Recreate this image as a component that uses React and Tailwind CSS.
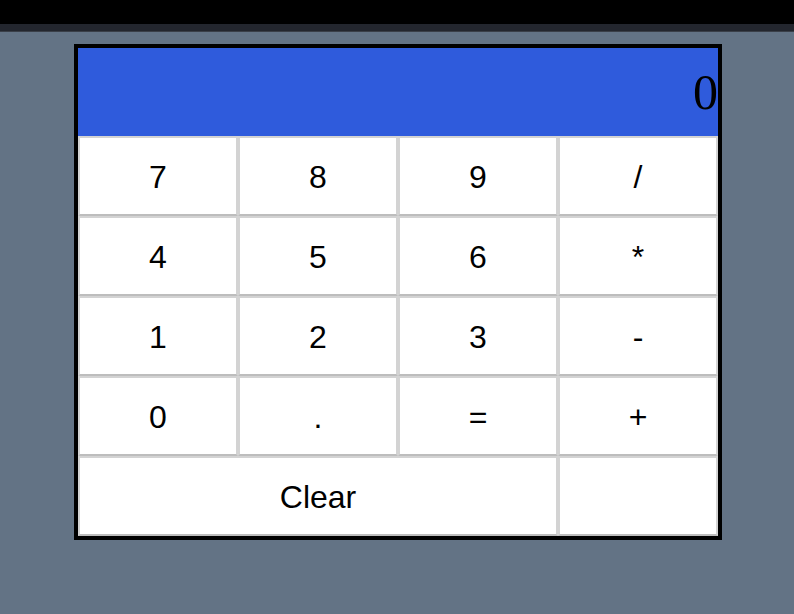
import React, { useState } from 'react';

const teclas = [
  ['7', '8', '9', '/'],
  ['4', '5', '6', '*'],
  ['1', '2', '3', '-'],
  ['0', '.', '=', '+'],
];

const Tecla = ({ texto, onClick, ancho = 'w-[160px]' }) => (
  <button
    onClick={onClick}
    className={`${ancho} h-[80px] bg-white border-2 border-[#d3d3d3] border-b-[#bdbdbd] text-black text-[32px] font-['Liberation_Sans',Arial,sans-serif] flex items-center justify-center pt-[1px]`}
  >
    {texto}
  </button>
);

const App = () => {
  const [pantalla, setPantalla] = useState('0');

  const handleTecla = (t) => {
    if (t === '=') {
      try {
        // eslint-disable-next-line no-eval
        setPantalla(String(eval(pantalla)));
      } catch (e) {
        setPantalla('Error');
      }
      return;
    }
    setPantalla(pantalla === '0' ? t : pantalla + t);
  };

  return (
    <div className="min-h-[614px] bg-[#637385]">
      <div className="h-[24px] bg-black" />
      <div className="h-[8px] bg-[#23262e] border-b border-[#3a3f48]" />
      <div className="pt-[12px]">
        <div className="w-[648px] ml-[74px] border-4 border-black">
          <div className="h-[88px] bg-[#2f5bdc] flex items-center justify-end">
            <span className="text-[50px] leading-none text-black font-['Liberation_Serif','Times_New_Roman',serif]">
              {pantalla}
            </span>
          </div>
          {teclas.map((fila, i) => (
            <div key={i} className="flex">
              {fila.map(t => (
                <Tecla key={t} texto={t} onClick={() => handleTecla(t)} />
              ))}
            </div>
          ))}
          <div className="flex">
            <Tecla texto="Clear" ancho="w-[480px]" onClick={() => setPantalla('0')} />
            <Tecla texto="" />
          </div>
        </div>
      </div>
    </div>
  );
};

export default App;
